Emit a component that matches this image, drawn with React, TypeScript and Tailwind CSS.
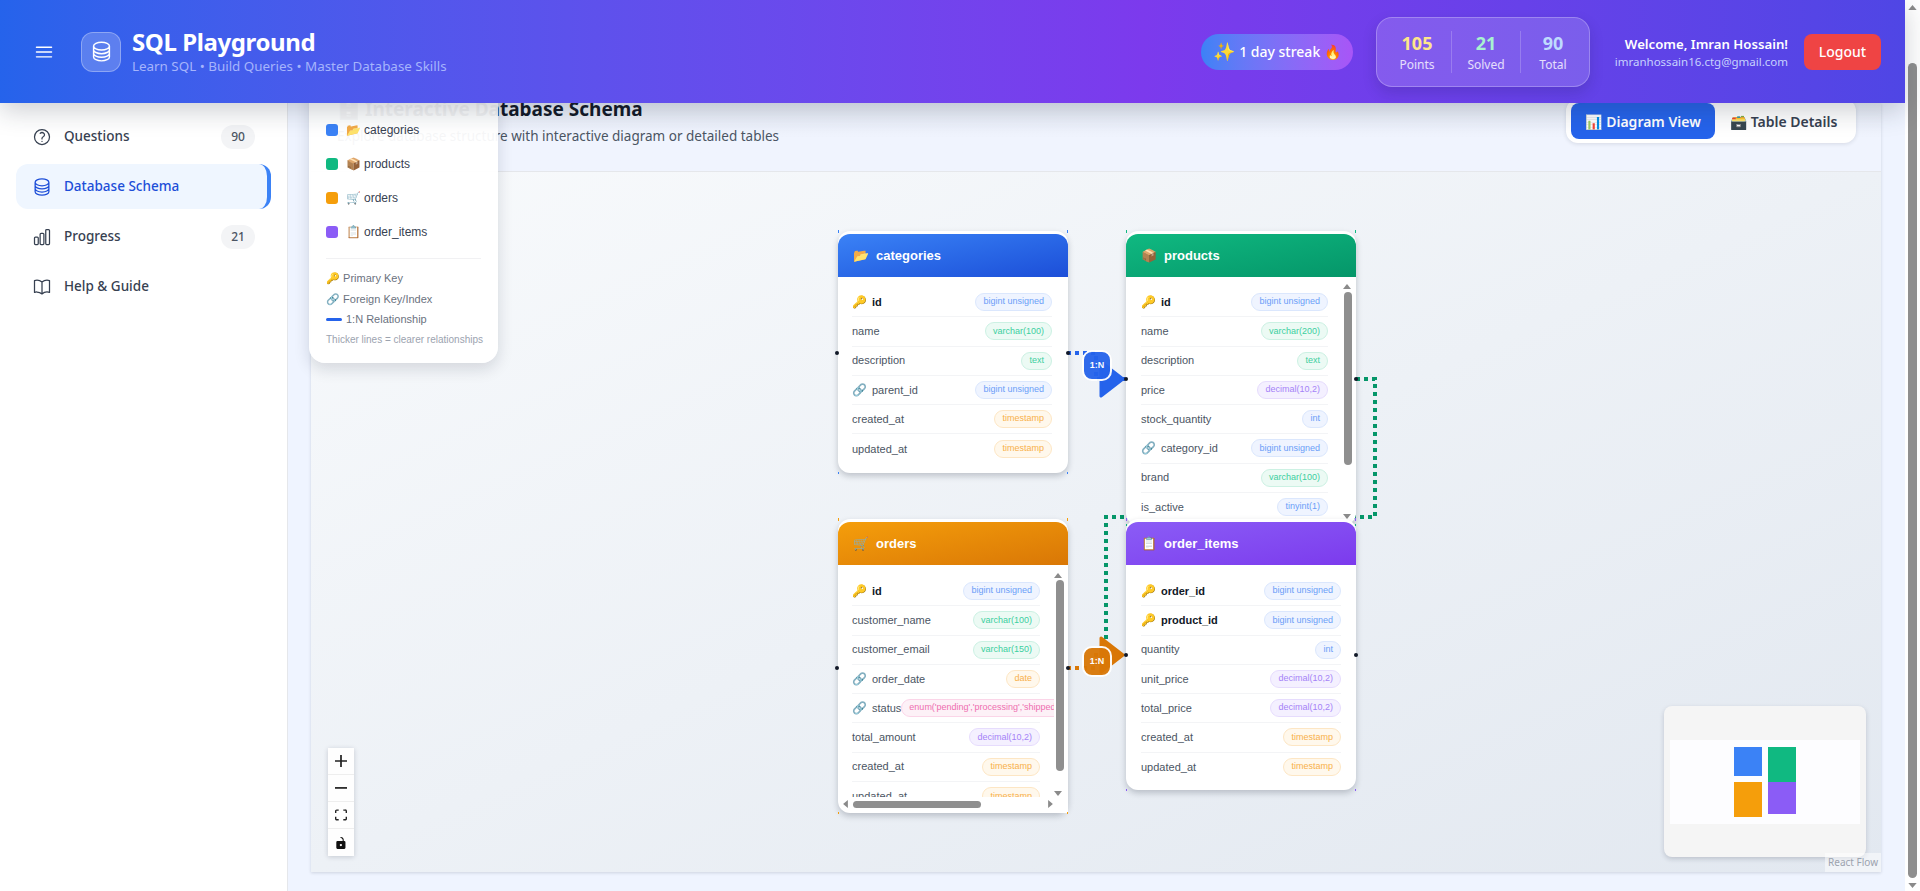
import React from 'react';
import {
  HiOutlineBars3,
  HiOutlineBookOpen,
  HiOutlineChartBar,
  HiOutlineCircleStack,
  HiOutlineQuestionMarkCircle,
} from 'react-icons/hi2';

type Kind = 'int' | 'str' | 'num' | 'time' | 'enum';
type Col = { name: string; type: string; kind: Kind; icon?: string; bold?: boolean };

const badgeStyles: Record<Kind, string> = {
  int: 'bg-[#eff4ff] text-[#6b9ef8] border-[#dbe7fd]',
  str: 'bg-[#ecfaf4] text-[#3ccf9f] border-[#ccf1e3]',
  num: 'bg-[#f4f0ff] text-[#a583f7] border-[#e6dcfd]',
  time: 'bg-[#fff8ec] text-[#f8b04a] border-[#fde6c4]',
  enum: 'bg-[#fdf1f7] text-[#ee6fb0] border-[#fbd5e8]',
};

const categories: Col[] = [
  { name: 'id', type: 'bigint unsigned', kind: 'int', icon: '🔑', bold: true },
  { name: 'name', type: 'varchar(100)', kind: 'str' },
  { name: 'description', type: 'text', kind: 'str' },
  { name: 'parent_id', type: 'bigint unsigned', kind: 'int', icon: '🔗' },
  { name: 'created_at', type: 'timestamp', kind: 'time' },
  { name: 'updated_at', type: 'timestamp', kind: 'time' },
];

const products: Col[] = [
  { name: 'id', type: 'bigint unsigned', kind: 'int', icon: '🔑', bold: true },
  { name: 'name', type: 'varchar(200)', kind: 'str' },
  { name: 'description', type: 'text', kind: 'str' },
  { name: 'price', type: 'decimal(10,2)', kind: 'num' },
  { name: 'stock_quantity', type: 'int', kind: 'int' },
  { name: 'category_id', type: 'bigint unsigned', kind: 'int', icon: '🔗' },
  { name: 'brand', type: 'varchar(100)', kind: 'str' },
  { name: 'is_active', type: 'tinyint(1)', kind: 'int' },
  { name: 'created_at', type: 'timestamp', kind: 'time' },
];

const orders: Col[] = [
  { name: 'id', type: 'bigint unsigned', kind: 'int', icon: '🔑', bold: true },
  { name: 'customer_name', type: 'varchar(100)', kind: 'str' },
  { name: 'customer_email', type: 'varchar(150)', kind: 'str' },
  { name: 'order_date', type: 'date', kind: 'time', icon: '🔗' },
  { name: 'status', type: "enum('pending','processing','shipped','delivered')", kind: 'enum', icon: '🔗' },
  { name: 'total_amount', type: 'decimal(10,2)', kind: 'num' },
  { name: 'created_at', type: 'timestamp', kind: 'time' },
  { name: 'updated_at', type: 'timestamp', kind: 'time' },
];

const orderItems: Col[] = [
  { name: 'order_id', type: 'bigint unsigned', kind: 'int', icon: '🔑', bold: true },
  { name: 'product_id', type: 'bigint unsigned', kind: 'int', icon: '🔑', bold: true },
  { name: 'quantity', type: 'int', kind: 'int' },
  { name: 'unit_price', type: 'decimal(10,2)', kind: 'num' },
  { name: 'total_price', type: 'decimal(10,2)', kind: 'num' },
  { name: 'created_at', type: 'timestamp', kind: 'time' },
  { name: 'updated_at', type: 'timestamp', kind: 'time' },
];

const Arrow = ({ dir, className }: { dir: 'up' | 'down' | 'left' | 'right'; className: string }) => {
  const points = { up: '0,6 5,0 10,6', down: '0,0 10,0 5,6', left: '6,0 6,10 0,5', right: '0,0 0,10 6,5' }[dir];
  const box = dir === 'up' || dir === 'down' ? '0 0 10 6' : '0 0 6 10';
  return (
    <svg viewBox={box} className={className}>
      <polygon points={points} fill="#8a8a8a" />
    </svg>
  );
};

const TableNode = ({
  title,
  emoji,
  header,
  tick,
  cols,
  className,
  bodyPad,
  children,
}: {
  title: string;
  emoji: string;
  header: string;
  tick: string;
  cols: Col[];
  className: string;
  bodyPad: string;
  children?: React.ReactNode;
}) => (
  <div className={`absolute w-[230px] font-['Liberation_Sans',sans-serif] ${className}`}>
    <div className="h-full bg-white rounded-xl shadow-[0_3px_6px_rgba(15,23,42,0.22)] pt-[3px] overflow-hidden flex flex-col">
      <div className={`h-[43px] shrink-0 rounded-t-xl flex items-center pl-[15px] gap-[9px] text-white text-[13px] font-bold ${header}`}>
        <span className="w-[14px] text-[13px]">{emoji}</span>
        <span>{title}</span>
      </div>
      <div className={`flex-1 overflow-hidden ${bodyPad}`}>
        {cols.map((c, i) => (
          <div
            key={c.name}
            className={`h-[29.25px] flex items-center justify-between ${i < cols.length - 1 ? 'border-b border-[#f3f4f6]' : ''}`}
          >
            <div className="flex items-center shrink-0 text-[11px] text-[#4b5563]">
              {c.icon && <span className="w-[20px] text-[12px]">{c.icon}</span>}
              <span className={c.bold ? 'font-bold text-[#111827]' : ''}>{c.name}</span>
            </div>
            <span className={`h-[18px] flex items-center px-[7px] rounded-full border text-[9px] whitespace-nowrap ${badgeStyles[c.kind]}`}>
              {c.type}
            </span>
          </div>
        ))}
      </div>
    </div>
    {children}
    <span className={`absolute left-0 -top-[1px] w-[1px] h-[3px] ${tick}`} />
    <span className={`absolute right-0 -top-[1px] w-[1px] h-[3px] ${tick}`} />
    <span className={`absolute left-0 -bottom-[1px] w-[1px] h-[2px] ${tick}`} />
    <span className={`absolute right-0 -bottom-[1px] w-[1px] h-[2px] ${tick}`} />
  </div>
);

const Handle = ({ className }: { className: string }) => (
  <span className={`absolute w-[4px] h-[4px] rounded-full bg-[#111827] ${className}`} />
);

const EdgeLabel = ({ className }: { className: string }) => (
  <div className={`absolute w-[30px] h-[31px] rounded-[10px] border-2 border-white flex items-center justify-center text-white text-[9px] font-bold opacity-95 font-['Liberation_Sans',sans-serif] ${className}`}>
    1:N
  </div>
);

const NavItem = ({
  icon,
  label,
  badge,
  active,
}: {
  icon: React.ReactNode;
  label: string;
  badge?: string;
  active?: boolean;
}) => (
  <div className={`h-[45px] rounded-xl flex items-center pl-[16px] pr-[16px] gap-[12px] text-[13.5px] font-medium ${active ? 'bg-[#eff6ff] text-[#1d4ed8] border-r-4 border-[#3b82f6]' : 'text-[#374151]'}`}>
    {icon}
    <span className="flex-1">{label}</span>
    {badge && (
      <span className="w-[34px] h-[24px] rounded-full bg-[#f3f4f6] flex items-center justify-center text-[12px] font-medium text-[#4b5563]">
        {badge}
      </span>
    )}
  </div>
);

const Stat = ({ value, label, color, className }: { value: string; label: string; color: string; className: string }) => (
  <div className={`text-center ${className}`}>
    <div className={`text-[18px] leading-[24px] font-bold ${color}`}>{value}</div>
    <div className="text-[12px] leading-[16px] mt-[2px] text-white/80">{label}</div>
  </div>
);

const LegendRow = ({ color, emoji, label }: { color: string; emoji: string; label: string }) => (
  <div className="h-[34px] flex items-center text-[12px] text-[#374151]">
    <span className={`w-[12px] h-[12px] rounded-[3px] mr-[8px] ${color}`} />
    <span className="text-[12px] w-[18px]">{emoji}</span>
    <span>{label}</span>
  </div>
);

const CtrlButton = ({ children, last }: { children: React.ReactNode; last?: boolean }) => (
  <div className={`h-[27px] flex items-center justify-center bg-[#fefefe] ${last ? '' : 'border-b border-[#eeeeee]'}`}>
    {children}
  </div>
);

export default function App() {
  return (
    <div className="h-[891px] w-full overflow-hidden flex bg-white font-['Noto_Sans',sans-serif]">
      <div className="flex-1 min-w-0 flex flex-col">
        {/* Header */}
        <header className="relative z-20 h-[103px] shrink-0 flex items-center pl-[35px] pr-[24px] text-white bg-linear-to-r from-[#2563eb] via-[#7c3aed] via-60% to-[#4f46e5] shadow-[0_8px_24px_rgba(30,41,59,0.22)]">
          <HiOutlineBars3 className="w-[22px] h-[22px] -ml-[2px] text-white" />
          <div className="ml-[26px] w-[40px] h-[40px] rounded-xl bg-white/20 border border-white/30 flex items-center justify-center">
            <HiOutlineCircleStack className="w-[23px] h-[23px]" />
          </div>
          <div className="ml-[11px]">
            <div className="text-[24px] leading-[28px] font-bold tracking-[-0.4px]">SQL Playground</div>
            <div className="text-[13.4px] leading-[20px] text-[#a5b4fc]">Learn SQL • Build Queries • Master Database Skills</div>
          </div>
          <div className="ml-auto h-[36px] w-[152px] rounded-full bg-linear-to-r from-[#3b82f6] to-[#a855f7] flex items-center justify-center text-[14px] font-medium">
            <span className="text-[18px] mr-[4px]">✨</span>1 day streak 🔥
          </div>
          <div className="ml-[23px] w-[214px] h-[70px] rounded-2xl bg-white/15 border border-white/25 shadow-[0_6px_14px_rgba(30,27,75,0.18)] flex items-center">
            <Stat value="105" label="Points" color="text-[#fde68a]" className="w-[75px] pl-[6px] border-r border-white/20" />
            <Stat value="21" label="Solved" color="text-[#a7f3d0]" className="w-[69px] border-r border-white/20" />
            <Stat value="90" label="Total" color="text-[#bfdbfe]" className="w-[68px] pr-[4px]" />
          </div>
          <div className="ml-[24px] w-[174px] text-right">
            <div className="text-[13.2px] leading-[20px] font-semibold">Welcome, Imran Hossain!</div>
            <div className="text-[11.5px] leading-[16px] text-[#c7d2fe]">imranhossain16.ctg@gmail.com</div>
          </div>
          <div className="ml-[16px] w-[77px] h-[36px] rounded-lg bg-[#ef4444] flex items-center justify-center text-[14px] font-medium">
            Logout
          </div>
        </header>

        <div className="flex-1 min-h-0 flex">
          {/* Sidebar */}
          <aside className="w-[288px] shrink-0 bg-white border-r border-[#e5e7eb] px-[16px] pt-[11px] flex flex-col gap-[5px]">
            <NavItem icon={<HiOutlineQuestionMarkCircle className="w-[20px] h-[20px]" />} label="Questions" badge="90" />
            <NavItem icon={<HiOutlineCircleStack className="w-[20px] h-[20px]" />} label="Database Schema" active />
            <NavItem icon={<HiOutlineChartBar className="w-[20px] h-[20px]" />} label="Progress" badge="21" />
            <NavItem icon={<HiOutlineBookOpen className="w-[20px] h-[20px]" />} label="Help & Guide" />
          </aside>

          {/* Main */}
          <main className="relative flex-1 min-w-0 bg-[#eff4ff] pl-[23px] pr-[24px] pb-[19px] flex flex-col">
            {/* Legend */}
            <div className="absolute z-10 left-[21px] -top-[30px] w-[189px] h-[290px] rounded-2xl bg-white/95 shadow-[0_6px_16px_rgba(15,23,42,0.14)] pt-[40px] px-[17px] font-['Liberation_Sans',sans-serif]">
              <LegendRow color="bg-[#3b82f6]" emoji="📂" label="categories" />
              <LegendRow color="bg-[#10b981]" emoji="📦" label="products" />
              <LegendRow color="bg-[#f59e0b]" emoji="🛒" label="orders" />
              <LegendRow color="bg-[#8b5cf6]" emoji="📋" label="order_items" />
              <div className="mt-[9px] pt-[9px] border-t border-[#f1f1f3] text-[11px] text-[#6b7280]">
                <div className="h-[20.5px] flex items-center">🔑 Primary Key</div>
                <div className="h-[20.5px] flex items-center">🔗 Foreign Key/Index</div>
                <div className="h-[20.5px] flex items-center gap-[4px]">
                  <span className="w-[16px] h-[3px] rounded-sm bg-[#2563eb]" />
                  1:N Relationship
                </div>
                <div className="h-[20.5px] flex items-center text-[10px] text-[#9ca3af] whitespace-nowrap">Thicker lines = clearer relationships</div>
              </div>
            </div>

            <div className="flex-1 min-h-0 flex flex-col shadow-[0_1px_3px_rgba(15,23,42,0.15)]">
              {/* Panel title */}
              <div className="h-[69px] shrink-0 border-b border-[#e5e7eb] bg-linear-to-b from-[#e9eef8] via-[#f0f4fe] to-[#f0f4fe] pl-[26px] pr-[25px] flex items-start justify-between">
                <div className="-mt-[8px]">
                  <div className="flex items-center gap-[4px] text-[19px] leading-[28px] font-bold text-[#111827]">
                    <span>🗄️</span>
                    <span>Interactive Database Schema</span>
                  </div>
                  <div className="text-[13.5px] leading-[20px] mt-[3px] text-[#4b5563]">
                    Explore database structure with interactive diagram or detailed tables
                  </div>
                </div>
                <div className="-mt-[4px] w-[290px] h-[44px] rounded-xl bg-white shadow-[0_1px_4px_rgba(15,23,42,0.12)] p-[4px] pl-[5px] flex items-center text-[14px] font-semibold">
                  <div className="w-[144px] h-[36px] rounded-lg bg-[#2563eb] text-white flex items-center justify-center gap-[4px]">
                    <span>📊</span>Diagram View
                  </div>
                  <div className="flex-1 flex items-center justify-center gap-[4px] text-[#374151]">
                    <span>🗃️</span>Table Details
                  </div>
                </div>
              </div>

              {/* Canvas */}
              <div className="relative flex-1 min-h-0 overflow-hidden bg-linear-to-br from-[#f8fafc] to-[#e2e8f0]">
                <svg className="absolute inset-0 w-full h-full" fill="none">
                  <path d="M756 181 H785 V207 H815" stroke="#2563eb" strokeWidth="4" strokeDasharray="4 4" />
                  <path d="M756 496 H785 V483 H815" stroke="#d97706" strokeWidth="4" strokeDasharray="4 4" />
                  <path d="M1045 207 H1064 V345 H795 V483 H815" stroke="#059669" strokeWidth="4" strokeDasharray="4 4" />
                  <polygon points="790,466 812,483 790,500" fill="#d97706" stroke="#d97706" strokeWidth="3" strokeLinejoin="round" />
                  <polygon points="790,190 812,207 790,224" fill="#2563eb" stroke="#2563eb" strokeWidth="3" strokeLinejoin="round" />
                </svg>

                <TableNode
                  title="categories"
                  emoji="📂"
                  header="bg-linear-to-br from-[#3b82f6] to-[#1d4ed8]"
                  tick="bg-[#3b82f6]"
                  cols={categories}
                  className="left-[527px] top-[59px] h-[242px]"
                  bodyPad="pt-[11px] pl-[14px] pr-[16px]"
                />
                <TableNode
                  title="products"
                  emoji="📦"
                  header="bg-linear-to-br from-[#10b981] to-[#059669]"
                  tick="bg-[#10b981]"
                  cols={products}
                  className="left-[815px] top-[59px] h-[294px]"
                  bodyPad="pt-[11px] pl-[15px] pr-[28px]"
                >
                  <Arrow dir="up" className="absolute left-[217px] top-[53px] w-[8px] h-[5px]" />
                  <div className="absolute left-[218px] top-[61px] w-[8px] h-[173px] rounded bg-[#8f8f8f]" />
                  <Arrow dir="down" className="absolute left-[217px] top-[283px] w-[8px] h-[5px]" />
                </TableNode>
                <TableNode
                  title="orders"
                  emoji="🛒"
                  header="bg-linear-to-br from-[#f59e0b] to-[#d97706]"
                  tick="bg-[#f59e0b]"
                  cols={orders}
                  className="left-[527px] top-[347px] h-[294px]"
                  bodyPad="pt-[12px] pl-[14px] pr-[28px]"
                >
                  <div className="absolute left-[216px] bottom-0 right-0 top-[46px] bg-white" />
                  <div className="absolute left-0 right-0 bottom-[3px] h-[13px] bg-white rounded-b-xl" />
                  <Arrow dir="up" className="absolute left-[216px] top-[54px] w-[8px] h-[5px]" />
                  <div className="absolute left-[218px] top-[61px] w-[8px] h-[191px] rounded bg-[#8f8f8f]" />
                  <Arrow dir="down" className="absolute left-[216px] top-[272px] w-[8px] h-[5px]" />
                  <Arrow dir="left" className="absolute left-[5px] bottom-[5px] w-[5px] h-[8px]" />
                  <div className="absolute left-[15px] bottom-[5px] w-[128px] h-[7px] rounded bg-[#8f8f8f]" />
                  <Arrow dir="right" className="absolute left-[210px] bottom-[5px] w-[5px] h-[8px]" />
                </TableNode>
                <TableNode
                  title="order_items"
                  emoji="📋"
                  header="bg-linear-to-br from-[#8b5cf6] to-[#7c3aed]"
                  tick="bg-[#8b5cf6]"
                  cols={orderItems}
                  className="left-[815px] top-[347px] h-[271px]"
                  bodyPad="pt-[12px] px-[15px]"
                />

                <Handle className="left-[524px] top-[179px]" />
                <Handle className="left-[755px] top-[179px]" />
                <Handle className="left-[813px] top-[205px]" />
                <Handle className="left-[1043px] top-[205px]" />
                <Handle className="left-[524px] top-[494px]" />
                <Handle className="left-[755px] top-[494px]" />
                <Handle className="left-[813px] top-[481px]" />
                <Handle className="left-[1043px] top-[481px]" />

                <EdgeLabel className="left-[771px] top-[178px] bg-[#2563eb]" />
                <EdgeLabel className="left-[771px] top-[474px] bg-[#d97706]" />

                {/* Zoom controls */}
                <div className="absolute left-[17px] top-[576px] w-[26px] shadow-[0_1px_5px_rgba(15,23,42,0.18)]">
                  <CtrlButton>
                    <svg viewBox="0 0 32 32" className="w-[12px] h-[12px] fill-[#222]">
                      <path d="M32 18.285h-13.714v13.715h-4.571v-13.715h-13.715v-4.57h13.715v-13.715h4.571v13.715h13.714v4.57z" />
                    </svg>
                  </CtrlButton>
                  <CtrlButton>
                    <svg viewBox="0 0 32 5" className="w-[12px] h-[2px] fill-[#222]">
                      <path d="M0 0h32v4.571h-32z" />
                    </svg>
                  </CtrlButton>
                  <CtrlButton>
                    <svg viewBox="0 0 32 30" className="w-[12px] h-[12px] fill-[#222]">
                      <path d="M3.692 4.63c0-.53.4-.938.939-.938h5.215V0H4.708C2.13 0 0 2.054 0 4.63v5.216h3.692V4.631zM27.354 0h-5.2v3.692h5.17c.53 0 .984.4.984.939v5.215H32V4.631A4.624 4.624 0 0027.354 0zm.954 24.83c0 .532-.4.94-.939.94h-5.215v3.768h5.215c2.577 0 4.631-2.13 4.631-4.707v-5.139h-3.692v5.139zm-23.677.94c-.531 0-.939-.4-.939-.94v-5.138H0v5.139c0 2.577 2.13 4.707 4.708 4.707h5.138V25.77H4.631z" />
                    </svg>
                  </CtrlButton>
                  <CtrlButton last>
                    <svg viewBox="0 0 25 32" className="w-[10px] h-[12px] fill-[#111]">
                      <path d="M21.333 10.667H19.81V7.619C19.81 3.429 16.38 0 12.19 0c-4.114 1.828-1.37 2.133.305 2.438 1.676.305 4.42 2.59 4.42 5.181v3.048H3.047A3.056 3.056 0 000 13.714v15.238A3.056 3.056 0 003.048 32h18.285a3.056 3.056 0 003.048-3.048V13.714a3.056 3.056 0 00-3.048-3.047zM12.19 24.533a3.056 3.056 0 01-3.047-3.047 3.056 3.056 0 013.047-3.048 3.056 3.056 0 013.048 3.048 3.056 3.056 0 01-3.048 3.047z" />
                    </svg>
                  </CtrlButton>
                </div>

                {/* Minimap */}
                <div className="absolute right-[15px] bottom-[15px] w-[202px] h-[151px] rounded-lg bg-[#f5f5f5] shadow-[0_2px_5px_rgba(15,23,42,0.18)] flex items-center justify-center">
                  <div className="w-[190px] h-[84px] bg-[#fdfdff] pt-[7px] pl-[64px] flex gap-[6px]">
                    <div className="w-[28px] flex flex-col gap-[6px]">
                      <div className="h-[29px] bg-[#3b82f6]" />
                      <div className="h-[35px] bg-[#f59e0b]" />
                    </div>
                    <div className="w-[28px] flex flex-col">
                      <div className="h-[35px] bg-[#10b981]" />
                      <div className="h-[32px] bg-[#8b5cf6]" />
                    </div>
                  </div>
                </div>
                <div className="absolute right-0 bottom-0 px-[3px] h-[19px] flex items-center bg-white/50 text-[10px] text-[#9ca3af]">
                  React Flow
                </div>
              </div>
            </div>
          </main>
        </div>
      </div>

      {/* Page scrollbar */}
      <div className="relative w-[15px] shrink-0 bg-white">
        <Arrow dir="up" className="absolute left-[3px] top-[5px] w-[9px] h-[5px]" />
        <div className="absolute left-[3px] top-[63px] w-[9px] h-[815px] rounded-[5px] bg-[#8f8f8f]" />
        <Arrow dir="down" className="absolute left-[3px] bottom-[3px] w-[9px] h-[5px]" />
      </div>
    </div>
  );
}
